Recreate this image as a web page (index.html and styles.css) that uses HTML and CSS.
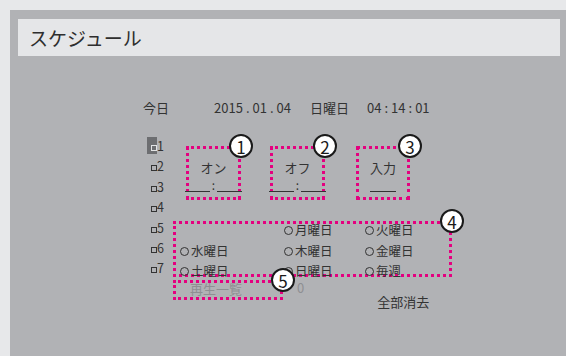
FILE: index.html
```html
<!DOCTYPE html>
<html lang="ja">

<head>
	<meta charset="utf-8" />
	<meta name="viewport" content="width=device-width, initial-scale=1.0" />
	<title>スケジュール</title>
	<link rel="stylesheet" href="styles.css">
</head>

<body>
	<div class="screen">
		<div class="title">スケジュール</div>

		<div class="today">
			<span class="today-label">今日</span>
			<span class="date">2015<i>.</i>01<i>.</i>04</span>
			<span class="weekday">日曜日</span>
			<span class="clock">04<i>:</i>14<i>:</i>01</span>
		</div>

		<div class="schedule">
			<ul class="slots">
				<li class="slot active"><span class="mark"><span class="box"></span></span>1</li>
				<li class="slot"><span class="mark"><span class="box"></span></span>2</li>
				<li class="slot"><span class="mark"><span class="box"></span></span>3</li>
				<li class="slot"><span class="mark"><span class="box"></span></span>4</li>
				<li class="slot"><span class="mark"><span class="box"></span></span>5</li>
				<li class="slot"><span class="mark"><span class="box"></span></span>6</li>
				<li class="slot"><span class="mark"><span class="box"></span></span>7</li>
			</ul>

			<div class="editor">
				<div class="times">
					<div class="note time-box">
						<span class="badge">1</span>
						<div class="label">オン</div>
						<div class="entry"><span class="blank"></span><span class="colon">:</span><span class="blank"></span></div>
					</div>
					<div class="note time-box">
						<span class="badge">2</span>
						<div class="label">オフ</div>
						<div class="entry"><span class="blank"></span><span class="colon">:</span><span class="blank"></span></div>
					</div>
					<div class="note time-box source">
						<span class="badge">3</span>
						<div class="label">入力</div>
						<div class="entry"><span class="blank"></span></div>
					</div>
				</div>

				<div class="note days">
					<span class="badge">4</span>
					<div class="day-grid">
						<span></span>
						<span class="day"><i class="radio"></i>月曜日</span>
						<span class="day"><i class="radio"></i>火曜日</span>
						<span class="day"><i class="radio"></i>水曜日</span>
						<span class="day"><i class="radio"></i>木曜日</span>
						<span class="day"><i class="radio"></i>金曜日</span>
						<span class="day"><i class="radio"></i>土曜日</span>
						<span class="day"><i class="radio"></i>日曜日</span>
						<span class="day"><i class="radio"></i>毎週</span>
					</div>
				</div>

				<div class="footer">
					<div class="note playlist">
						<span class="badge">5</span>
						再生一覧
					</div>
					<span class="count">0</span>
					<span class="clear">全部消去</span>
				</div>
			</div>
		</div>
	</div>
</body>

</html>
```

FILE: styles.css
```css
body {
	margin: 0;
	background: #e7e8ea;
	font-family: "Noto Sans CJK JP", sans-serif;
	color: #333;
}

.screen {
	margin: 10px 0 0 10px;
	height: 346px;
	padding: 9px 6px 0 8px;
	box-sizing: border-box;
	background: #b1b2b5;
}

.title {
	height: 37px;
	line-height: 37px;
	padding-left: 11px;
	font-size: 19px;
	background: #e5e6e8;
	color: #2e2e2e;
}

.today {
	display: flex;
	margin-top: 44px;
	padding-left: 125px;
	height: 16px;
	line-height: 16px;
	font-size: 13px;
}

.today i {
	font-style: normal;
	margin: 0 3px;
}

.today-label {
	width: 71px;
}

.date {
	width: 96px;
}

.weekday {
	width: 57px;
}

.schedule {
	display: flex;
	margin-top: 21px;
	padding-left: 129px;
}

.slots {
	width: 26px;
	margin: 0;
	padding: 0;
	list-style: none;
}

.slot {
	display: flex;
	height: 20.4px;
	line-height: 18px;
	font-size: 12.5px;
}

.mark {
	display: flex;
	align-items: flex-end;
	justify-content: flex-end;
	width: 10px;
	height: 17px;
	padding-bottom: 3px;
	box-sizing: border-box;
}

.box {
	width: 6px;
	height: 6px;
	border: 1.5px solid #333;
	box-sizing: border-box;
}

.active .mark {
	background: #6d6e71;
}

.active .box {
	border-color: #e2e3e5;
}

.editor {
	display: flex;
	flex-direction: column;
}

.note {
	position: relative;
	border: 3px dotted #e4007f;
	box-sizing: border-box;
}

.badge {
	position: absolute;
	top: -15px;
	right: -15px;
	display: flex;
	align-items: center;
	justify-content: center;
	width: 24px;
	height: 24px;
	border: 2px solid #1a1a1a;
	border-radius: 50%;
	box-sizing: border-box;
	background: #fff;
	color: #1a1a1a;
	font-size: 17px;
	line-height: 1;
	z-index: 1;
}

.times {
	display: flex;
	margin-top: 9px;
	padding-left: 13px;
}

.time-box {
	display: flex;
	flex-direction: column;
	align-items: center;
	width: 55px;
	height: 54px;
}

.time-box + .time-box {
	margin-left: 29px;
}

.time-box.source {
	margin-left: 31px;
	width: 54px;
}

.label {
	padding-top: 11px;
	line-height: 16px;
	font-size: 13px;
}

.entry {
	display: flex;
	align-items: flex-end;
	align-self: stretch;
	height: 14px;
	margin: 2px -4px 0;
	font-size: 12px;
	line-height: 12px;
}

.blank {
	flex: 1;
	height: 100%;
	border-bottom: 1px solid #333;
}

.colon {
	margin: 0 2px 1px;
}

.source .entry {
	justify-content: center;
}

.source .blank {
	flex: none;
	width: 26px;
}

.days {
	width: 279px;
	height: 56px;
	margin-top: 21px;
}

.day-grid {
	display: grid;
	grid-template-columns: 104px 81px auto;
	grid-auto-rows: 20.5px;
	margin-top: -4px;
	padding-left: 4px;
	font-size: 12.5px;
	line-height: 20.5px;
}

.day {
	display: flex;
	align-items: center;
}

.radio {
	width: 9px;
	height: 9px;
	margin: 1px 2px 0 0;
	border: 1.3px solid #333;
	border-radius: 50%;
	box-sizing: border-box;
}

.footer {
	display: flex;
	align-items: flex-start;
	margin-top: 3px;
}

.playlist {
	width: 110px;
	height: 20px;
	padding-left: 14px;
	font-size: 13px;
	line-height: 11px;
	color: #8e8f92;
}

.count {
	margin-left: 14px;
	line-height: 16px;
	font-size: 13px;
	color: #8e8f92;
}

.clear {
	margin-left: 73px;
	margin-top: 14px;
	line-height: 16px;
	font-size: 13px;
}
```
